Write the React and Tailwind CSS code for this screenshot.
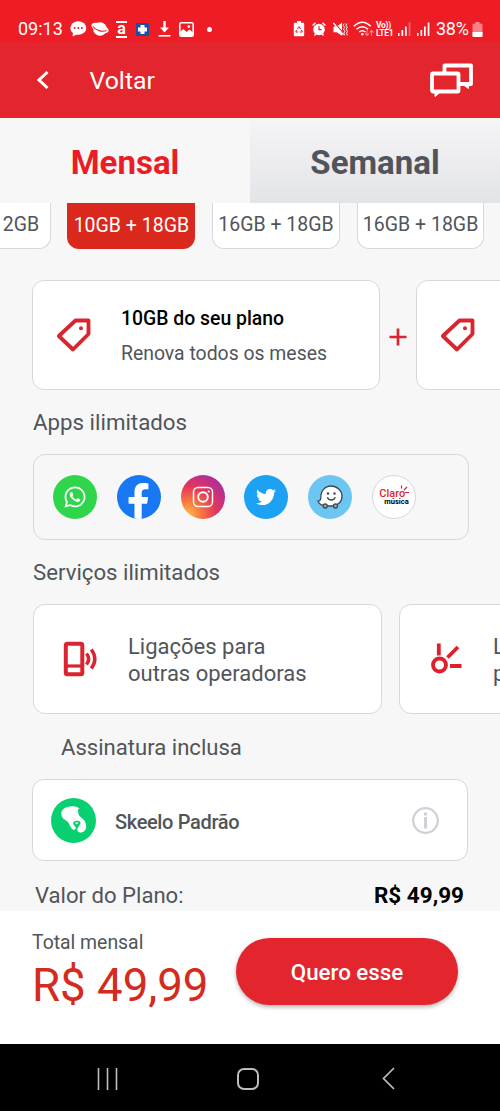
import React, { useState } from 'react';
import { FaWhatsapp, FaFacebookF, FaTwitter } from 'react-icons/fa';

const plans = [
  { id: 1, label: '10GB + 18GB' },
  { id: 2, label: '16GB + 18GB' },
  { id: 3, label: '16GB + 18GB' }
];

const ChatDots = () => (
  <svg className="w-[17px] h-4 shrink-0" viewBox="0 0 17 16" fill="white">
    <ellipse cx="8.3" cy="7" rx="8" ry="6.8" />
    <path d="M3 11l-.4 4.5L8 13z" />
    <g fill="#ee1c25">
      <circle cx="4.7" cy="7" r="1" />
      <circle cx="8.3" cy="7" r="1" />
      <circle cx="11.9" cy="7" r="1" />
    </g>
  </svg>
);

const Planet = () => (
  <svg className="w-[18px] h-4 shrink-0" viewBox="0 0 18 16" fill="none">
    <circle cx="9" cy="8" r="6.8" fill="white" />
    <ellipse cx="9" cy="7" rx="8.6" ry="3.8" transform="rotate(22 9 7)" fill="white" stroke="white" strokeWidth="1" />
    <path d="M2 5.500C5 9.500 11 11.200 15.500 9.500" stroke="#ee1c25" strokeWidth="1.100" />
  </svg>
);

const HealthCross = () => (
  <svg className="w-[13px] h-[13px] shrink-0" viewBox="0 0 13 13">
    <rect width="13" height="13" rx="1" fill="#1d4f9c" />
    <path d="M4.500 2h4v2.500H11v4H8.500V11h-4V8.500H2v-4h2.500z" fill="white" />
  </svg>
);

const DownloadArrow = () => (
  <svg className="w-[13px] h-4 shrink-0" viewBox="0 0 13 16" fill="white">
    <path d="M5.300 0h2.400v6.500H11L6.500 11.500 2 6.500h3.300z" />
    <rect x="0.500" y="14" width="12" height="1.600" />
  </svg>
);

const Picture = () => (
  <svg className="w-[15px] h-[15px] shrink-0" viewBox="0 0 15 15">
    <rect x="0.800" y="0.800" width="13.400" height="13.400" rx="1.500" fill="none" stroke="white" strokeWidth="1.600" />
    <path d="M1 14V10l3.300-3 3.200 3 3-2.500L14 10.500V14z" fill="white" />
    <circle cx="9.800" cy="4.600" r="1.400" fill="white" />
  </svg>
);

const BatteryCare = () => (
  <svg className="w-3 h-4 shrink-0" viewBox="0 0 12 16">
    <path d="M4 0h4v1.800h2q1.200 0 1.200 1.200v11q0 1.200-1.200 1.200H2Q.8 15.200.8 14V3Q.8 1.800 2 1.800h2z" fill="white" />
    <path d="M4.300 8.200L6 5.500l1.700 2.700M8.500 9l.8 2H6.800M5.200 11H2.700l.9-2" fill="none" stroke="#ee1c25" strokeWidth="1" />
  </svg>
);

const Alarm = () => (
  <svg className="w-3.5 h-3.5 shrink-0" viewBox="0 0 14 14" fill="none" stroke="white">
    <circle cx="7" cy="7.500" r="5.800" fill="white" stroke="none" />
    <path d="M.6 3.500L3.500.8M13.400 3.500L10.500.8M2.500 13.500l1.500-2M11.500 13.500l-1.500-2" strokeWidth="1.400" />
    <path d="M7 4.300v3.400h2.600" stroke="#ee1c25" strokeWidth="1.200" />
  </svg>
);

const Muted = () => (
  <svg className="w-[15px] h-[15px] shrink-0" viewBox="0 0 15 15">
    <path d="M.5 4.500h3.200L9 .7v13l-5.300-3.500H.5z" fill="white" />
    <path d="M1 .5l10.500 12" stroke="#ee1c25" strokeWidth="1.300" />
    <path d="M.4 1l10 11.800" stroke="white" strokeWidth="1.300" />
    <path d="M11.200 1.500l-1 1.800 1.300 2-1 2 1.300 2-1 2 1 2M13.900 1.500l-1 1.800 1.300 2-1 2 1.300 2-1 2 1 2" fill="none" stroke="white" strokeWidth="1" />
  </svg>
);

const Wifi = () => (
  <svg className="w-[21px] h-4 shrink-0" viewBox="0 0 21 16" fill="none" stroke="white">
    <path d="M.8 5.300Q9.300-2.800 17.800 5.300M3.500 8.300q5.800-5 11.600 0M6.200 11q3.100-2.600 6.200 0" strokeWidth="1.500" />
    <circle cx="9.300" cy="13.300" r="1.300" fill="white" stroke="none" />
    <path d="M14 9v5.500M12 12.500l2 2 2-2M18.500 15V9.500M16.500 11.500l2-2 2 2" strokeWidth="1.100" opacity="0.450" />
  </svg>
);

const Signal = ({ weak }) => (
  <svg className="w-[13px] h-[14px] shrink-0" viewBox="0 0 13 14" fill="white">
    <rect x="0" y="11" width="1.500" height="3" />
    <rect x="3.500" y="8" width="1.700" height="6" />
    <rect x="7" y="4.500" width="1.700" height="9.500" />
    <rect x="10.700" y="0.500" width="1.700" height="13.500" opacity={weak ? 0.35 : 1} />
  </svg>
);

const Battery = () => (
  <svg className="w-[11px] h-[15px] shrink-0" viewBox="0 0 11 15" fill="white">
    <path d="M3.500 0h4v1.500H9q1.500 0 1.500 1.500v11q0 1-1 1h-8q-1 0-1-1V3Q.5 1.500 2 1.500h1.500z" opacity="0.450" />
    <path d="M.5 10h10v4q0 1-1 1h-8q-1 0-1-1z" />
  </svg>
);

const StatusBar = () => (
  <div className="h-[42px] shrink-0 bg-[#ee1c25] text-white flex items-center pt-4 pl-[18px] pr-[17px]">
    <span className="w-[52px] text-[18px] leading-none">09:13</span>
    <ChatDots />
    <span className="w-1" />
    <Planet />
    <span className="ml-[7px] w-[11px] h-[17px] border-y-2 border-white flex items-center justify-center text-[16px] font-bold leading-none pb-[2px]">
      <span className="leading-[9px]">a</span>
    </span>
    <span className="w-[9px]" />
    <HealthCross />
    <span className="w-[9px]" />
    <DownloadArrow />
    <span className="w-2" />
    <Picture />
    <span className="ml-[13px] w-[5px] h-[5px] rounded-full bg-white" />
    <div className="ml-auto flex items-center">
      <BatteryCare />
      <span className="w-[7px]" />
      <Alarm />
      <span className="w-[7px]" />
      <Muted />
      <span className="w-[5px]" />
      <Wifi />
      <div className="ml-0.5 w-[18px] flex flex-col text-[8.500px] font-bold leading-[8px] whitespace-nowrap tracking-[-0.3px]">
        <span>Vo))</span>
        <span>LTE1</span>
      </div>
      <span className="w-1" />
      <Signal weak />
      <span className="w-1.5" />
      <Signal />
      <span className="ml-1.5 w-9 text-[18px] leading-none tracking-[-0.3px]">38%</span>
      <Battery />
    </div>
  </div>
);

const TagIcon = () => (
  <svg className="w-9 h-9 shrink-0" viewBox="0 0 36 36" fill="none">
    <path d="M19.500 3.500h13V17L17 32.500 2.800 19z" stroke="#da2530" strokeWidth="3.800" strokeLinejoin="round" />
    <circle cx="25" cy="11.300" r="2" fill="#da2530" />
  </svg>
);

const PhoneIcon = () => (
  <svg className="w-[35px] h-9 shrink-0" viewBox="0 0 35 36" fill="none" stroke="#da2530">
    <rect x="2.800" y="2.700" width="16.500" height="30.500" rx="1.500" strokeWidth="4" />
    <path d="M2 25h18" strokeWidth="3.200" />
    <path d="M23.500 12.500q4.300 5.500 0 11M28.300 8.500q7 9.500 0 19" strokeWidth="3.500" />
  </svg>
);

const ClaroMark = () => (
  <svg className="w-8 h-8 shrink-0" viewBox="0 0 32 32" fill="none" stroke="#df1f2b" strokeWidth="3.800">
    <circle cx="9.500" cy="22" r="6.500" />
    <path d="M8.800.5v12M17.500 14.500L28 4M20 23h11.500" />
  </svg>
);

const InstagramGlyph = () => (
  <svg className="w-[22px] h-[22px]" viewBox="0 0 22 22" fill="none" stroke="white" strokeWidth="1.500">
    <rect x="1.500" y="1.500" width="19" height="19" rx="4.500" />
    <circle cx="11" cy="11" r="4.800" strokeWidth="1.900" />
    <circle cx="16.700" cy="5.500" r="1.100" fill="white" stroke="none" />
  </svg>
);

const WazeGlyph = () => (
  <svg className="w-[26px] h-6" viewBox="0 0 26 24" fill="white" stroke="#3f4850" strokeWidth="1.300">
    <path d="M3.800 13C3.500 6 8 1 14 1s11 4.500 11 10.200S20.500 21 14.500 21H8.500C5 20.500 2 18.500 1 16.200c1.500 0 2.600-1 2.800-3.200z" />
    <circle cx="8.200" cy="21" r="2" fill="#a7b3bb" />
    <circle cx="18.500" cy="21" r="2" fill="#a7b3bb" />
    <path d="M10.300 12.200c1.600 3.700 6.400 3.700 8 0" fill="none" />
    <g fill="#3f4850" stroke="none">
      <circle cx="11" cy="8.500" r="1.200" />
      <circle cx="17.500" cy="8.500" r="1.200" />
    </g>
  </svg>
);

const SkeeloGlyph = () => (
  <svg className="w-[26px] h-7" viewBox="0 0 26 28">
    <path
      d="M11 .3c2.500-.3 5 .3 7.500 2.200-2 .5-1.500 1.500-1.300 3.500.2 2.500 1 4 3 5.500 3 2 5 5 5 9 0 3.500-2.500 6-5.500 6-2.800 0-4-2.200-3-4.500.8-1.800 3-3.500 2.800-5.500-.1-1.300-2.500-2-5-1.500-2 .4-2.700 1.500-2.200 3 .8 2 2.700 2.500 2.500 4.200-.2 1.600-2.500 2.200-4 .6-1.800-2-2.600-5.500-4.300-7.300C3.500 13.500.3 12 .3 7.800.3 3.500 4.500.5 11 .3z"
      fill="white"
    />
    <path d="M13.800 16.800l3.700-.6-1.700 2.300z" fill="white" />
  </svg>
);

const AppsBox = () => (
  <div className="ml-[33px] w-[436px] h-[86px] border-[1.5px] border-[#d8d8dc] rounded-xl flex items-center gap-[19.8px] pl-[19px]">
    <div className="w-11 h-11 rounded-full bg-[#2fd64c] flex items-center justify-center">
      <FaWhatsapp className="w-6 h-6 text-white" />
    </div>
    <div className="w-11 h-11 rounded-full bg-[#1877f2] overflow-hidden flex items-end justify-center">
      <FaFacebookF className="w-[37px] h-[37px] text-white shrink-0 -mb-px" />
    </div>
    <div className="w-11 h-11 rounded-full flex items-center justify-center bg-[radial-gradient(circle_at_15%_90%,#fdb94f_0%,#f9763f_25%,#e3365c_52%,#b52f92_78%,#8a3ab9_100%)]">
      <InstagramGlyph />
    </div>
    <div className="w-11 h-11 rounded-full bg-[#1da1f2] flex items-center justify-center">
      <FaTwitter className="w-5 h-5 text-white" />
    </div>
    <div className="w-11 h-11 rounded-full bg-[#6cc6f2] flex items-center justify-center">
      <WazeGlyph />
    </div>
    <div className="w-11 h-11 rounded-full bg-white border border-[#d8d8dc] flex items-center justify-center">
      <div className="relative flex flex-col">
        <span className="text-[11px] leading-[9px] font-medium text-[#df1f2b]">Claro</span>
        <span className="pl-[5px] text-[7.500px] leading-[8px] font-bold text-black">música</span>
        <svg className="absolute -top-1 left-[21px] w-2.5 h-2.5" viewBox="0 0 10 10" stroke="#df1f2b" strokeWidth="1.200">
          <path d="M1.500.5v3M4 5l3-3M5 7.500h4" />
        </svg>
      </div>
    </div>
  </div>
);

const App = () => {
  const [selectedPlan, setSelectedPlan] = useState(1);

  return (
    <div className="w-[500px] h-[1111px] overflow-hidden flex flex-col bg-[#f7f7f7] text-[#50555b] font-['Roboto',sans-serif] whitespace-nowrap">
      <StatusBar />

      {/* Header */}
      <header className="h-[76px] shrink-0 bg-[#e3262e] text-white flex items-center pl-9 pr-[27px]">
        <svg className="w-3.5 h-5" viewBox="0 0 14 20" fill="none" stroke="white" strokeWidth="3">
          <path d="M11.500 2L3 10l8.500 8" />
        </svg>
        <span className="ml-[39.5px] pt-[3px] text-[24.800px] leading-none">Voltar</span>
        <svg className="ml-auto w-[43px] h-[34px]" viewBox="0 0 43 34" fill="none" stroke="white" strokeWidth="3.800" strokeLinejoin="round">
          <path d="M14.500 9V2.500h26.500v18.500h-11" />
          <path d="M32 21l6.500 4.500V21z" fill="white" strokeWidth="1" />
          <rect x="2" y="10.500" width="26.500" height="18" rx="1" />
          <path d="M5 28.500v5l6-5z" fill="white" strokeWidth="1" />
        </svg>
      </header>

      {/* Tabs */}
      <div className="h-[85px] shrink-0 flex text-[33px] font-bold leading-none">
        <button type="button" className="w-[250px] pt-1 text-[#ea1d26]">Mensal</button>
        <button type="button" className="w-[250px] pt-1 bg-linear-to-b from-[#f5f5f6] to-[#e3e4e8]">Semanal</button>
      </div>

      {/* Plan sizes */}
      <div className="h-[46px] shrink-0 flex gap-[16.800px] text-[19.500px]">
        <div className="w-[50.700px] shrink-0 bg-white border-r-[1.5px] border-b-[1.5px] border-[#d8d8dc] rounded-br-xl flex items-center justify-end pr-[10.500px] pb-px">
          2GB
        </div>
        {plans.map((plan) => (
          <button
            key={plan.id}
            type="button"
            onClick={() => setSelectedPlan(plan.id)}
            className={`w-[127.800px] shrink-0 rounded-b-xl pb-px ${
              selectedPlan === plan.id
                ? 'bg-[#da291c] text-white'
                : 'bg-white border-x-[1.5px] border-b-[1.5px] border-[#d8d8dc]'
            }`}
          >
            {plan.label}
          </button>
        ))}
      </div>

      {/* Plan benefits */}
      <div className="mt-[31px] ml-8 h-[110px] shrink-0 flex items-center">
        <div className="w-[348px] h-full shrink-0 bg-white border-[1.5px] border-[#d8d8dc] rounded-xl flex items-center pl-[23px]">
          <TagIcon />
          <div className="ml-[29px] pt-px flex flex-col">
            <span className="text-[19.400px] leading-[35px] font-medium text-black">10GB do seu plano</span>
            <span className="text-[19.400px] leading-[35px]">Renova todos os meses</span>
          </div>
        </div>
        <svg className="ml-[9px] w-[18px] h-[18px] shrink-0 mt-1" viewBox="0 0 18 18" stroke="#da2530" strokeWidth="2.700">
          <path d="M9 .5v17M.5 9h17" />
        </svg>
        <div className="ml-[9px] w-[348px] h-full shrink-0 bg-white border-[1.5px] border-[#d8d8dc] rounded-xl flex items-center pl-[23px]">
          <TagIcon />
        </div>
      </div>

      <h2 className="h-16 shrink-0 flex items-center pt-0.5 pl-[33px] text-[22.300px]">Apps ilimitados</h2>
      <div className="shrink-0">
        <AppsBox />
      </div>

      <h2 className="h-16 shrink-0 flex items-center pt-0.5 pl-[33px] text-[22.200px]">Serviços ilimitados</h2>
      <div className="ml-[33px] h-[110px] shrink-0 flex gap-[17px]">
        <div className="w-[349px] shrink-0 bg-white border-[1.5px] border-[#d8d8dc] rounded-xl flex items-center pl-[29px]">
          <PhoneIcon />
          <p className="ml-[30px] pt-[3px] text-[22px] leading-[26.500px]">
            Ligações para
            <br />
            outras operadoras
          </p>
        </div>
        <div className="w-[349px] shrink-0 bg-white border-[1.5px] border-[#d8d8dc] rounded-xl flex items-center pl-[30px]">
          <ClaroMark />
          <p className="ml-[31px] pt-[3px] text-[22px] leading-[26.500px]">
            L
            <br />
            p
          </p>
        </div>
      </div>

      <h2 className="h-[65px] shrink-0 flex items-center pt-0.5 pl-[61px] text-[22.100px]">Assinatura inclusa</h2>
      <div className="ml-8 w-[436px] h-[82px] shrink-0 bg-white border-[1.5px] border-[#d8d8dc] rounded-xl flex items-center pl-[18px] pr-7">
        <div className="w-[45px] h-[45px] rounded-full bg-[#08cf70] flex items-center justify-center">
          <SkeeloGlyph />
        </div>
        <span className="ml-[19px] pt-[3px] text-[20px] font-medium tracking-[-0.350px]">Skeelo Padrão</span>
        <svg className="ml-auto w-[27px] h-[27px]" viewBox="0 0 27 27" fill="#d0d1d8">
          <circle cx="13.500" cy="13.500" r="12.300" fill="none" stroke="#d0d1d8" strokeWidth="2.300" />
          <rect x="12" y="5.500" width="3" height="3" />
          <rect x="12" y="10" width="3" height="11.500" />
        </svg>
      </div>

      <div className="h-[50px] shrink-0 flex items-center justify-between pl-[35px] pr-9 pt-[19px] text-[22.100px]">
        <span>Valor do Plano:</span>
        <span className="text-[22.500px] font-bold text-black">R$ 49,99</span>
      </div>

      {/* Total and call to action */}
      <div className="h-[133px] shrink-0 bg-white flex pl-8">
        <div className="w-[204px] pt-[21px] flex flex-col">
          <span className="text-[19.400px] leading-[22px]">Total mensal</span>
          <span className="mt-[5px] text-[45.600px] leading-[54px] text-[#d52b1e]">R$ 49,99</span>
        </div>
        <button type="button" className="mt-[27px] w-[222px] h-[67px] pt-0.5 rounded-full bg-[#e3262e] text-white text-[22.300px] font-medium shadow-[0_2px_4px_rgba(0,0,0,0.3)]">
          Quero esse
        </button>
      </div>

      {/* System navigation */}
      <nav className="h-[67px] shrink-0 bg-black flex items-center pt-0.5">
        <svg className="ml-[97px] w-[21px] h-[22px]" viewBox="0 0 21 22" stroke="#bdbdbd" strokeWidth="1.600">
          <path d="M1.500 0v22M10.500 0v22M19.500 0v22" />
        </svg>
        <span className="ml-[119px] w-[22px] h-[22px] border-2 border-[#bdbdbd] rounded-[7px]" />
        <svg className="ml-[123px] w-[13px] h-[23px]" viewBox="0 0 13 23" fill="none" stroke="#bdbdbd" strokeWidth="1.700">
          <path d="M12 1L1.500 11.500 12 22" />
        </svg>
      </nav>
    </div>
  );
};

export default App;
